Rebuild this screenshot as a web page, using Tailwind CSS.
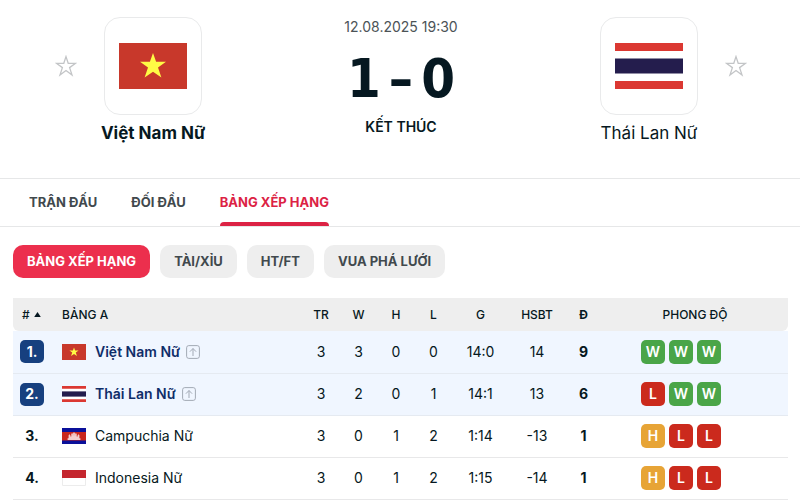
<!DOCTYPE html>
<html lang="vi">
<head>
<meta charset="utf-8">
<meta name="viewport" content="width=device-width, initial-scale=1">
<title>Việt Nam Nữ 1–0 Thái Lan Nữ</title>
<script src="https://cdn.jsdelivr.net/npm/@tailwindcss/browser@4"></script>
</head>
<body class="bg-white font-['Inter','Noto_Sans',sans-serif] text-[#061821]">
<svg class="hidden" aria-hidden="true">
  <symbol id="star" viewBox="0 0 22 22"><path d="M11 1.6 13.2 8.3H20.6L14.6 12.6 17 20 11 15.5 5 20 7.4 12.6 1.4 8.3H8.8Z" fill="none" stroke="#c3c5c7" stroke-width="1.3"/></symbol>
  <symbol id="vn" viewBox="0 0 68 46" preserveAspectRatio="none"><path fill="#c8382b" d="M0 0h68v46H0z"/><path fill="#fffb45" d="M34 10 37.1 18.7H47L39 24.5 42.4 34.6 34 28.7 25.6 34.6 29 24.5 21 18.7H30.9Z"/></symbol>
  <symbol id="th" viewBox="0 0 68 46" preserveAspectRatio="none"><path fill="#fff" d="M0 0h68v46H0z"/><path fill="#db3832" d="M0 0h68v8H0zM0 38h68v8H0z"/><path fill="#241d4d" d="M0 15.5h68v15H0z"/></symbol>
  <symbol id="kh" viewBox="0 0 24 16"><path fill="#0a109a" d="M0 0h24v16H0z"/><path fill="#c9261c" d="M0 4h24v8.5H0z"/><path fill="#f3cfd0" d="M5.6 12V10.2h1V7.3l.9-1 .9 1v1.2h.9V6l.8-1 .8 1v1.5h.2V5.2l.9-1.2.9 1.2v2.3h.2V6l.8-1 .8 1v2.4h.9V7.3l.9-1 .9 1v2.9h1V12Z"/></symbol>
  <symbol id="id" viewBox="0 0 24 16"><path fill="#fff" d="M0 0h24v16H0z"/><path fill="#c4262e" d="M0 0h24v8H0z"/><path fill="none" stroke="#ececec" d="M.5 8v7.5h23V8"/></symbol>
  <symbol id="up" viewBox="0 0 14 14"><rect x=".6" y=".6" width="12.8" height="12.8" rx="2.2" fill="none" stroke="#a3aab5" stroke-width="1"/><path d="M7 11V3.6M3.9 6.7 7 3.5l3.1 3.2" fill="none" stroke="#a3aab5" stroke-width="1"/></symbol>
</svg>

<header class="flex items-start pt-[17px] pr-[53px] pb-[33px] pl-[55px] border-b border-[#e6e7e8]">
  <button class="mt-[38px] shrink-0" aria-label="Theo dõi Việt Nam Nữ"><svg class="size-[22px]"><use href="#star"/></svg></button>
  <a href="#" class="ml-5 flex w-28 shrink-0 flex-col items-center gap-1.5">
    <span class="flex size-[98px] items-center justify-center rounded-2xl border border-[#e9eaeb]"><svg class="h-[46px] w-[68px]"><use href="#vn"/></svg></span>
    <strong class="whitespace-nowrap text-[17px]/6 font-bold">Việt Nam Nữ</strong>
  </a>
  <div class="flex flex-1 flex-col items-center">
    <time class="text-sm/5 text-[#4c5357]">12.08.2025 19:30</time>
    <div class="mt-[15px] flex h-[54px] items-center gap-2 font-['DejaVu_Sans_Condensed','DejaVu_Sans',sans-serif] text-[54px]/[54px] font-bold"><span>1</span><span>–</span><span>0</span></div>
    <p class="mt-[11px] text-sm/5 font-semibold">KẾT THÚC</p>
  </div>
  <a href="#" class="mr-5 flex w-28 shrink-0 flex-col items-center gap-1.5">
    <span class="flex size-[98px] items-center justify-center rounded-2xl border border-[#e9eaeb]"><svg class="h-[46px] w-[68px]"><use href="#th"/></svg></span>
    <span class="whitespace-nowrap text-[17px]/6">Thái Lan Nữ</span>
  </a>
  <button class="mt-[38px] shrink-0" aria-label="Theo dõi Thái Lan Nữ"><svg class="size-[22px]"><use href="#star"/></svg></button>
</header>

<nav class="flex h-12 gap-[34px] border-b border-[#e6e7e8] px-[29px] text-[13px] font-bold text-[#41494d]">
  <a href="#" class="flex items-center">TRẬN ĐẤU</a>
  <a href="#" class="flex items-center">ĐỐI ĐẦU</a>
  <a href="#" class="relative flex items-center text-[#dc2244] after:absolute after:inset-x-0 after:bottom-0 after:h-1 after:rounded-t-sm after:bg-[#dc2244]">BẢNG XẾP HẠNG</a>
</nav>

<div class="flex gap-[10px] px-[13px] pt-[18px] text-[13px] font-bold text-[#41494d]">
  <button class="h-[33px] rounded-[10px] bg-[#ec2f4d] px-[14px] text-white">BẢNG XẾP HẠNG</button>
  <button class="h-[33px] rounded-[10px] bg-[#eeeeee] px-[14px]">TÀI/XỈU</button>
  <button class="h-[33px] rounded-[10px] bg-[#eeeeee] px-[14px]">HT/FT</button>
  <button class="h-[33px] rounded-[10px] bg-[#eeeeee] px-[14px]">VUA PHÁ LƯỚI</button>
</div>

<main class="mt-5 pr-3 pl-[13px]">
<table class="w-full table-fixed text-center text-sm">
  <colgroup><col class="w-[49px]"><col><col class="w-[38px]"><col class="w-[37px]"><col class="w-[38px]"><col class="w-[37px]"><col class="w-[57px]"><col class="w-14"><col class="w-[37px]"><col class="w-[186px]"></colgroup>
  <thead class="text-xs">
    <tr class="h-[33px] *:bg-[#eeeeee] *:font-medium">
      <th class="rounded-bl-md pl-[9px] text-left"><span class="flex items-center gap-1">#<svg class="size-[7px]" viewBox="0 0 7 7"><path d="M3.5 1 6.8 6H.2Z" fill="#061821"/></svg></span></th>
      <th class="text-left">BẢNG A</th><th>TR</th><th>W</th><th>H</th><th>L</th><th>G</th><th>HSBT</th><th><b>Đ</b></th><th class="rounded-br-md">PHONG ĐỘ</th>
    </tr>
  </thead>
  <tbody>
    <tr class="h-[42px] border-b border-[#e5eaf1] bg-[#f0f6ff]">
      <td class="pl-[7px]"><span class="flex h-[23px] w-6 items-center justify-center rounded-[5px] bg-[#17407f] font-bold text-white">1.</span></td>
      <td><div class="flex items-center"><svg class="h-4 w-6"><use href="#vn"/></svg><a href="#" class="ml-[9px] font-semibold text-[#0f2d69]">Việt Nam Nữ</a><svg class="ml-1.5 size-[14px]"><use href="#up"/></svg></div></td>
      <td>3</td><td>3</td><td>0</td><td>0</td><td>14:0</td><td>14</td><td class="font-bold">9</td>
      <td><div class="flex gap-1 pl-[39px] font-semibold text-white *:flex *:size-6 *:items-center *:justify-center *:rounded-[5px]"><span class="bg-[#4aa548]">W</span><span class="bg-[#4aa548]">W</span><span class="bg-[#4aa548]">W</span></div></td>
    </tr>
    <tr class="h-[42px] border-b border-[#e5eaf1] bg-[#f0f6ff]">
      <td class="pl-[7px]"><span class="flex h-[23px] w-6 items-center justify-center rounded-[5px] bg-[#17407f] font-bold text-white">2.</span></td>
      <td><div class="flex items-center"><svg class="h-4 w-6"><use href="#th"/></svg><a href="#" class="ml-[9px] font-semibold text-[#0f2d69]">Thái Lan Nữ</a><svg class="ml-1.5 size-[14px]"><use href="#up"/></svg></div></td>
      <td>3</td><td>2</td><td>0</td><td>1</td><td>14:1</td><td>13</td><td class="font-bold">6</td>
      <td><div class="flex gap-1 pl-[39px] font-semibold text-white *:flex *:size-6 *:items-center *:justify-center *:rounded-[5px]"><span class="bg-[#cb2a1d]">L</span><span class="bg-[#4aa548]">W</span><span class="bg-[#4aa548]">W</span></div></td>
    </tr>
    <tr class="h-[42px] border-b border-[#e8e8e9]">
      <td class="pl-[7px]"><span class="flex h-[23px] w-6 items-center justify-center font-bold">3.</span></td>
      <td><div class="flex items-center"><svg class="h-4 w-6"><use href="#kh"/></svg><a href="#" class="ml-[9px]">Campuchia Nữ</a></div></td>
      <td>3</td><td>0</td><td>1</td><td>2</td><td>1:14</td><td>-13</td><td class="font-bold">1</td>
      <td><div class="flex gap-1 pl-[39px] font-semibold text-white *:flex *:size-6 *:items-center *:justify-center *:rounded-[5px]"><span class="bg-[#e7a436]">H</span><span class="bg-[#cb2a1d]">L</span><span class="bg-[#cb2a1d]">L</span></div></td>
    </tr>
    <tr class="h-[42px] border-b border-[#e8e8e9]">
      <td class="pl-[7px]"><span class="flex h-[23px] w-6 items-center justify-center font-bold">4.</span></td>
      <td><div class="flex items-center"><svg class="h-4 w-6"><use href="#id"/></svg><a href="#" class="ml-[9px]">Indonesia Nữ</a></div></td>
      <td>3</td><td>0</td><td>1</td><td>2</td><td>1:15</td><td>-14</td><td class="font-bold">1</td>
      <td><div class="flex gap-1 pl-[39px] font-semibold text-white *:flex *:size-6 *:items-center *:justify-center *:rounded-[5px]"><span class="bg-[#e7a436]">H</span><span class="bg-[#cb2a1d]">L</span><span class="bg-[#cb2a1d]">L</span></div></td>
    </tr>
  </tbody>
</table>
</main>
</body>
</html>
